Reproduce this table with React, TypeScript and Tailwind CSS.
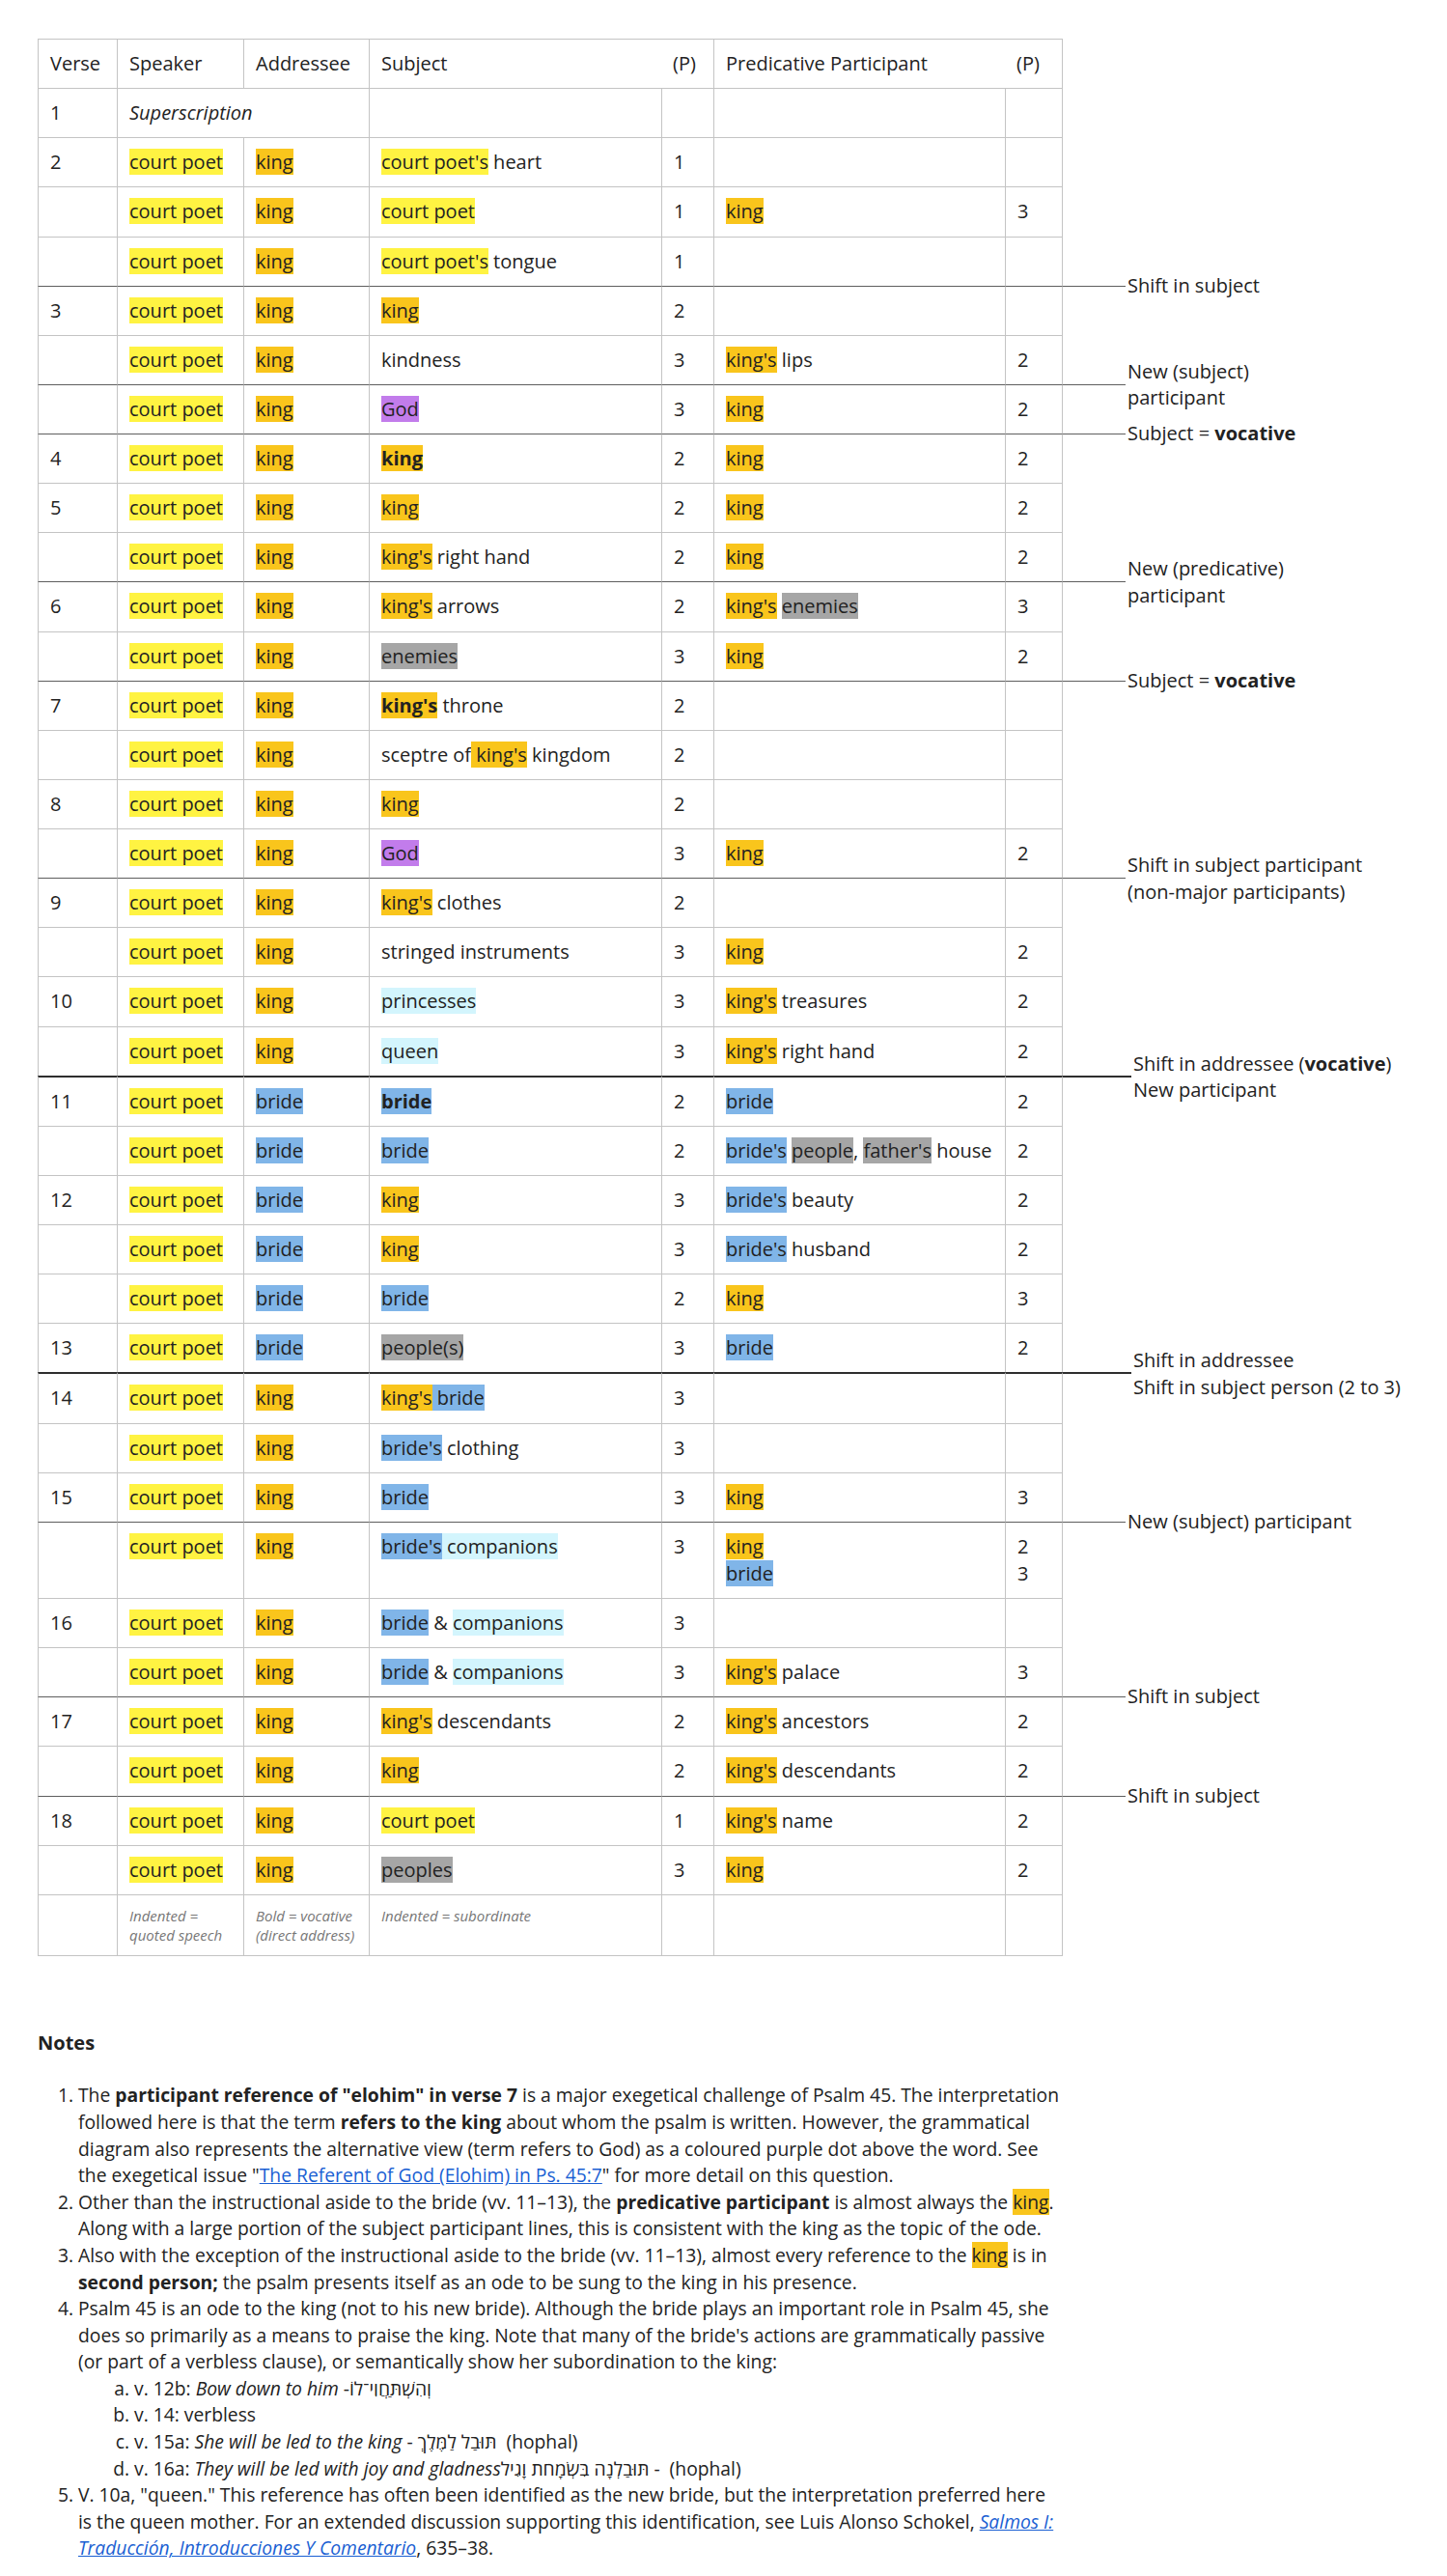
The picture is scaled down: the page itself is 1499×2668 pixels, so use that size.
import type { ReactNode } from "react";

type Hl = "poet" | "king" | "god" | "gray" | "bride" | "cyan";
type Seg = string | [string, Hl, boolean?];
type Sep = "thin" | "thick" | undefined;

type Row = {
  v?: string;
  ad?: "king" | "bride";
  subj: Seg[];
  p: string;
  pred?: Seg[];
  p2?: string;
  sep?: Sep;
  note?: ReactNode;
};

const hl: Record<Hl, string> = {
  poet: "bg-[#fff342]",
  king: "bg-[#f9c51c]",
  god: "bg-[#c27ceb]",
  gray: "bg-[#a6a6a6]",
  bride: "bg-[#80b5e8]",
  cyan: "bg-[#d3f5fd]",
};

const K: Seg = ["king", "king"];
const Ks: Seg = ["king's", "king"];
const B: Seg = ["bride", "bride"];
const Bs: Seg = ["bride's", "bride"];

const rows: Row[] = [
  { v: "2", subj: [["court poet's", "poet"], " heart"], p: "1" },
  { subj: [["court poet", "poet"]], p: "1", pred: [K], p2: "3" },
  { subj: [["court poet's", "poet"], " tongue"], p: "1" },
  { v: "3", sep: "thin", note: "Shift in subject", subj: [K], p: "2" },
  { subj: ["kindness"], p: "3", pred: [Ks, " lips"], p2: "2" },
  {
    sep: "thin",
    note: (
      <>
        New (subject)
        <br />
        participant
      </>
    ),
    subj: [["God", "god"]],
    p: "3",
    pred: [K],
    p2: "2",
  },
  {
    v: "4",
    sep: "thin",
    note: (
      <>
        Subject = <b>vocative</b>
      </>
    ),
    subj: [["king", "king", true]],
    p: "2",
    pred: [K],
    p2: "2",
  },
  { v: "5", subj: [K], p: "2", pred: [K], p2: "2" },
  { subj: [Ks, " right hand"], p: "2", pred: [K], p2: "2" },
  {
    v: "6",
    sep: "thin",
    note: (
      <>
        New (predicative)
        <br />
        participant
      </>
    ),
    subj: [Ks, " arrows"],
    p: "2",
    pred: [Ks, " ", ["enemies", "gray"]],
    p2: "3",
  },
  { subj: [["enemies", "gray"]], p: "3", pred: [K], p2: "2" },
  {
    v: "7",
    sep: "thin",
    note: (
      <>
        Subject = <b>vocative</b>
      </>
    ),
    subj: [["king's", "king", true], " throne"],
    p: "2",
  },
  { subj: ["sceptre of", [" king's", "king"], " kingdom"], p: "2" },
  { v: "8", subj: [K], p: "2" },
  { subj: [["God", "god"]], p: "3", pred: [K], p2: "2" },
  {
    v: "9",
    sep: "thin",
    note: (
      <>
        Shift in subject participant
        <br />
        (non-major participants)
      </>
    ),
    subj: [Ks, " clothes"],
    p: "2",
  },
  { subj: ["stringed instruments"], p: "3", pred: [K], p2: "2" },
  { v: "10", subj: [["princesses", "cyan"]], p: "3", pred: [Ks, " treasures"], p2: "2" },
  { subj: [["queen", "cyan"]], p: "3", pred: [Ks, " right hand"], p2: "2" },
  {
    v: "11",
    ad: "bride",
    sep: "thick",
    note: (
      <>
        Shift in addressee (<b>vocative</b>)
        <br />
        New participant
      </>
    ),
    subj: [["bride", "bride", true]],
    p: "2",
    pred: [B],
    p2: "2",
  },
  {
    ad: "bride",
    subj: [B],
    p: "2",
    pred: [Bs, " ", ["people", "gray"], ", ", ["father's", "gray"], " house"],
    p2: "2",
  },
  { v: "12", ad: "bride", subj: [K], p: "3", pred: [Bs, " beauty"], p2: "2" },
  { ad: "bride", subj: [K], p: "3", pred: [Bs, " husband"], p2: "2" },
  { ad: "bride", subj: [B], p: "2", pred: [K], p2: "3" },
  { v: "13", ad: "bride", subj: [["people(s)", "gray"]], p: "3", pred: [B], p2: "2" },
  {
    v: "14",
    sep: "thick",
    note: (
      <>
        Shift in addressee
        <br />
        Shift in subject person (2 to 3)
      </>
    ),
    subj: [Ks, [" bride", "bride"]],
    p: "3",
  },
  { subj: [Bs, " clothing"], p: "3" },
  { v: "15", subj: [B], p: "3", pred: [K], p2: "3" },
  {
    sep: "thin",
    note: "New (subject) participant",
    subj: [Bs, [" companions", "cyan"]],
    p: "3",
    pred: [K, "\n", B],
    p2: "2\n3",
  },
  { v: "16", subj: [B, " & ", ["companions", "cyan"]], p: "3" },
  { subj: [B, " & ", ["companions", "cyan"]], p: "3", pred: [Ks, " palace"], p2: "3" },
  {
    v: "17",
    sep: "thin",
    note: "Shift in subject",
    subj: [Ks, " descendants"],
    p: "2",
    pred: [Ks, " ancestors"],
    p2: "2",
  },
  { subj: [K], p: "2", pred: [Ks, " descendants"], p2: "2" },
  {
    v: "18",
    sep: "thin",
    note: "Shift in subject",
    subj: [["court poet", "poet"]],
    p: "1",
    pred: [Ks, " name"],
    p2: "2",
  },
  { subj: [["peoples", "gray"]], p: "3", pred: [K], p2: "2" },
];

function Text({ segs }: { segs: Seg[] }) {
  return (
    <>
      {segs.map((s, i) => {
        if (s === "\n") return <br key={i} />;
        if (typeof s === "string") return <span key={i}>{s}</span>;
        return (
          <span key={i} className={`${hl[s[1]]} ${s[2] ? "font-bold" : ""}`}>
            {s[0]}
          </span>
        );
      })}
    </>
  );
}

const top = (sep: Sep) =>
  sep === "thick"
    ? "border-t-2 border-t-[#2e2e2e]"
    : sep === "thin"
      ? "border-t border-t-[#5e5e5e]"
      : "border-t border-t-[#c4c4c4]";

const base = "border-l border-l-[#c4c4c4] px-3 py-[11px] align-top";
const last = "border-r border-r-[#c4c4c4]";

function Note({ sep, children }: { sep: Sep; children?: ReactNode }) {
  return (
    <td className={`relative p-0 ${sep ? top(sep) : ""}`}>
      {sep === "thick" && <span className="absolute left-full top-[-2px] h-[2px] w-[6px] bg-[#2e2e2e]" />}
      {children && (
        <div
          className={`absolute left-full top-[-1px] -translate-y-1/2 whitespace-nowrap leading-[27.5px] ${
            sep === "thick" ? "pl-[8px]" : "pl-[2px]"
          }`}
        >
          {children}
        </div>
      )}
    </td>
  );
}

export default function App() {
  return (
    <div className="min-h-[2668px] bg-white pl-[39px] pt-[40px] text-[#222222] [font-family:'Open_Sans',sans-serif]">
      <table className="w-[1127px] table-fixed border-separate border-spacing-0 text-[20px] leading-[28.12px]">
        <colgroup>
          <col className="w-[82px]" />
          <col className="w-[131px]" />
          <col className="w-[130px]" />
          <col className="w-[303px]" />
          <col className="w-[54px]" />
          <col className="w-[302px]" />
          <col className="w-[60px]" />
          <col className="w-[65px]" />
        </colgroup>
        <tbody>
          <tr>
            <td className={`${top(undefined)} ${base}`}>Verse</td>
            <td className={`${top(undefined)} ${base}`}>Speaker</td>
            <td className={`${top(undefined)} ${base}`}>Addressee</td>
            <td className={`${top(undefined)} ${base}`}>Subject</td>
            <td className={`${top(undefined)} px-3 py-[11px] align-top`}>(P)</td>
            <td className={`${top(undefined)} ${base}`}>Predicative Participant</td>
            <td className={`${top(undefined)} ${last} px-3 py-[11px] align-top`}>(P)</td>
            <Note sep={undefined} />
          </tr>
          <tr>
            <td className={`${top(undefined)} ${base}`}>1</td>
            <td colSpan={2} className={`${top(undefined)} ${base} italic`}>
              Superscription
            </td>
            <td className={`${top(undefined)} ${base}`}></td>
            <td className={`${top(undefined)} ${base}`}></td>
            <td className={`${top(undefined)} ${base}`}></td>
            <td className={`${top(undefined)} ${base} ${last}`}></td>
            <Note sep={undefined} />
          </tr>
          {rows.map((r, i) => (
            <tr key={i}>
              <td className={`${top(r.sep)} ${base}`}>{r.v}</td>
              <td className={`${top(r.sep)} ${base}`}>
                <span className={hl.poet}>court poet</span>
              </td>
              <td className={`${top(r.sep)} ${base}`}>
                <span className={r.ad === "bride" ? hl.bride : hl.king}>{r.ad ?? "king"}</span>
              </td>
              <td className={`${top(r.sep)} ${base}`}>
                <Text segs={r.subj} />
              </td>
              <td className={`${top(r.sep)} ${base}`}>{r.p}</td>
              <td className={`${top(r.sep)} ${base}`}>{r.pred && <Text segs={r.pred} />}</td>
              <td className={`${top(r.sep)} ${base} ${last} whitespace-pre-line`}>{r.p2}</td>
              <Note sep={r.sep}>{r.note}</Note>
            </tr>
          ))}
          <tr className="text-[15px] italic leading-[20px] text-[#777777]">
            <td className={`${top(undefined)} ${base} border-b border-b-[#c4c4c4]`}></td>
            <td className={`${top(undefined)} ${base} border-b border-b-[#c4c4c4]`}>Indented = quoted speech</td>
            <td className={`${top(undefined)} ${base} border-b border-b-[#c4c4c4]`}>Bold = vocative (direct address)</td>
            <td className={`${top(undefined)} ${base} border-b border-b-[#c4c4c4]`}>Indented = subordinate</td>
            <td className={`${top(undefined)} ${base} border-b border-b-[#c4c4c4]`}></td>
            <td className={`${top(undefined)} ${base} border-b border-b-[#c4c4c4]`}></td>
            <td className={`${top(undefined)} ${base} ${last} border-b border-b-[#c4c4c4]`}></td>
            <Note sep={undefined} />
          </tr>
        </tbody>
      </table>

      <div className="mt-[76px] w-[1061px] text-[19.3px] leading-[27.6px]">
        <h3 className="text-[20px] font-bold">Notes</h3>
        <ol className="mt-[27px] list-decimal pl-[42px]">
          <li>
            The <b>participant reference of "elohim" in verse 7</b> is a major exegetical challenge of Psalm 45. The
            interpretation followed here is that the term <b>refers to the king</b> about whom the psalm is written.
            However, the grammatical diagram also represents the alternative view (term refers to God) as a coloured
            purple dot above the word. See the exegetical issue "
            <a className="text-[#1a5fd3] underline">The Referent of God (Elohim) in Ps. 45:7</a>" for more detail on
            this question.
          </li>
          <li>
            Other than the instructional aside to the bride (vv. 11–13), the <b>predicative participant</b> is almost
            always the <span className={hl.king}>king</span>. Along with a large portion of the subject participant
            lines, this is consistent with the king as the topic of the ode.
          </li>
          <li>
            Also with the exception of the instructional aside to the bride (vv. 11–13), almost every reference to the{" "}
            <span className={hl.king}>king</span> is in <b>second person;</b> the psalm presents itself as an ode to be
            sung to the king in his presence.
          </li>
          <li>
            Psalm 45 is an ode to the king (not to his new bride). Although the bride plays an important role in Psalm
            45, she does so primarily as a means to praise the king. Note that many of the bride's actions are
            grammatically passive (or part of a verbless clause), or semantically show her subordination to the king:
            <ol className="list-[lower-alpha] pl-[58px]">
              <li>
                v. 12b: <i>Bow down to him</i> -וְהִשְׁתַּחֲוִי־לוֹ
              </li>
              <li>v. 14: verbless</li>
              <li>
                v. 15a: <i>She will be led to the king</i> - תּוּבַל לַמֶּלֶךְ&nbsp; (hophal)
              </li>
              <li>
                v. 16a: <i>They will be led with joy and gladness</i>תּוּבַלְנָה בִּשְׂמָחֹת וָגִיל -&nbsp; (hophal)
              </li>
            </ol>
          </li>
          <li>
            V. 10a, "queen." This reference has often been identified as the new bride, but the interpretation preferred
            here is the queen mother. For an extended discussion supporting this identification, see Luis Alonso
            Schokel,{" "}
            <a className="italic text-[#1a5fd3] underline">Salmos I: Traducción, Introducciones Y Comentario</a>,
            635–38.
          </li>
        </ol>
      </div>
    </div>
  );
}
